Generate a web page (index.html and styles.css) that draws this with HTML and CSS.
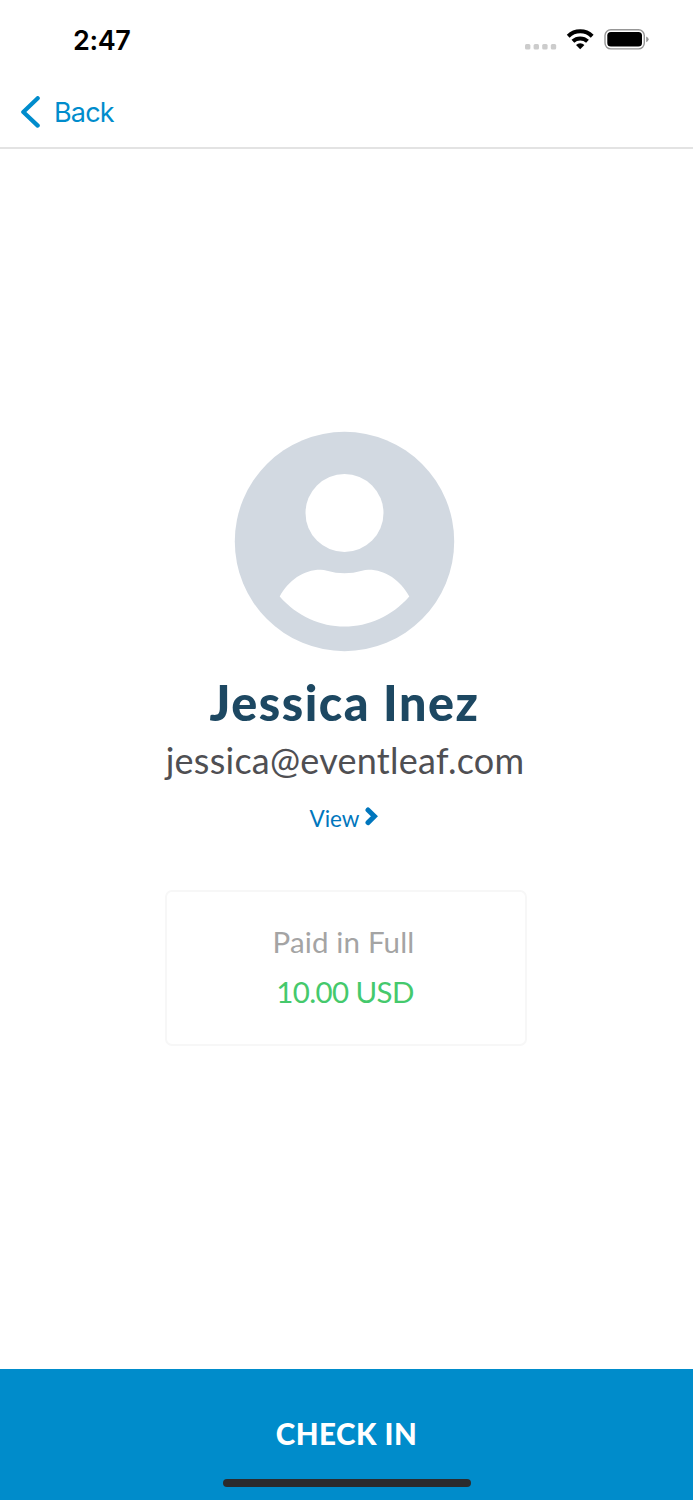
FILE: index.html
```html
<!DOCTYPE html>
<html lang="en">
<head>
<meta charset="utf-8">
<title>Jessica Inez</title>
<link rel="stylesheet" href="styles.css">
</head>
<body>
<div class="screen">
  <header class="status-bar">
    <span class="time">2:47</span>
    <svg class="status-icons" width="126" height="24" viewBox="524 28 126 24" aria-hidden="true">
      <g fill="#ccc">
        <rect x="525" y="44" width="5.4" height="5.4" rx="1.5"/>
        <rect x="533.6" y="44" width="5.4" height="5.4" rx="1.5"/>
        <rect x="542.2" y="44" width="5.4" height="5.4" rx="1.5"/>
        <rect x="550.8" y="44" width="5.4" height="5.4" rx="1.5"/>
      </g>
      <g fill="none" stroke="#000" stroke-width="4">
        <path d="M568.2 36.2a17.2 17.2 0 0 1 24 0"/>
        <path d="M572.9 41.3a10.6 10.6 0 0 1 14.6 0"/>
      </g>
      <path d="M576 45a6.2 6.2 0 0 1 8.400 0L580.200 49.200z"/>
      <rect x="605" y="29.7" width="39.3" height="19.2" rx="5.8" fill="none" stroke="#969696" stroke-width="1.4"/>
      <rect x="607.3" y="32" width="34.7" height="14.6" rx="3.6"/>
      <path d="M646.2 36.4q2.4.8 2.4 2.9t-2.4 2.9z" fill="#969696"/>
    </svg>
  </header>
  <nav class="nav-bar">
    <a class="back">
      <svg class="back-icon" width="20" height="32" viewBox="0 0 20 32" aria-hidden="true"><path d="M17.700 2.200 3.300 16l14.400 13.600" /></svg>
      <span class="back-label">Back</span>
    </a>
  </nav>
  <main class="profile">
    <svg class="avatar" width="220" height="220" viewBox="0.5 0.5 220 220" aria-hidden="true">
      <circle cx="110" cy="110" r="109.7" fill="#d2d9e1"/>
      <circle cx="110" cy="81.5" r="39" fill="#fff"/>
      <path d="M45.2 165C54 149 69 138.3 86 138.3q3.500 0 6.500 1 17.500 5 35 0 3-1 6.500-1C151 138.300 166 149 174.800 165 157 185 134 195 110 195S63 185 45.200 165z" fill="#fff"/>
    </svg>
    <h1 class="name">Jessica Inez</h1>
    <p class="email">jessica@eventleaf.com</p>
    <a class="view">
      <span class="view-label">View</span>
      <svg class="view-icon" width="13" height="20" viewBox="0 0 13 20" aria-hidden="true"><path d="m3 4 6.400 6.300L3 16.600"/></svg>
    </a>
    <section class="payment">
      <span class="payment-status">Paid in Full</span>
      <span class="payment-amount">10.00 USD</span>
    </section>
  </main>
  <footer class="action-bar">
    <span class="check-in">CHECK IN</span>
    <div class="home-indicator"></div>
  </footer>
</div>
</body>
</html>
```
FILE: styles.css
```css
* { box-sizing: border-box; }
body { margin: 0; background: #fff; }
.screen {
  width: 693px;
  height: 1500px;
  display: flex;
  flex-direction: column;
  font-family: Lato, sans-serif;
  white-space: nowrap;
}
.status-bar {
  height: 80px;
  padding: 0 43px 0 73px;
  display: flex;
  align-items: center;
  justify-content: space-between;
}
.time { padding-top: 2px; font: 600 27px/32px Inter, sans-serif; letter-spacing: -0.4px; }
.nav-bar {
  height: 69px;
  padding: 0 21px 3px 20px;
  display: flex;
  align-items: center;
  border-bottom: 2px solid #e3e3e3;
}
.back { display: flex; align-items: center; gap: 14px; color: #008ccc; }
.back-icon { fill: none; stroke: #008ccc; stroke-width: 4.2; stroke-linecap: round; stroke-linejoin: round; }
.back-label { padding-top: 1px; font: 400 27px/32px Inter, sans-serif; letter-spacing: -0.8px; }
.profile {
  flex: 1;
  padding: 282.5px 0 0;
  display: flex;
  flex-direction: column;
  align-items: center;
}
.avatar { margin-right: 4px; overflow: visible; }
.name {
  margin: 20px 4px 0 0;
  font-size: 48.5px;
  line-height: 60px;
  font-weight: 900;
  letter-spacing: 1.5px;
  color: #1d4862;
}
.email {
  margin: 5px 3px 0 0;
  font-size: 36px;
  line-height: 46px;
  letter-spacing: 0.25px;
  color: #4f4f53;
}
.view { margin: 20px 6px 0 0; height: 32px; display: flex; gap: 5px; color: #0076bd; }
.view-label { font-size: 22.5px; line-height: 32px; }
.view-icon { margin-top: 3px; fill: none; stroke: #0076bd; stroke-width: 5; stroke-linecap: round; }
.payment {
  width: 362px;
  height: 156px;
  margin: 55px 2px 0 0;
  padding: 30px 4px 0 0;
  border: 2px solid #f7f7f7;
  border-radius: 7px;
  display: flex;
  flex-direction: column;
  align-items: center;
  gap: 10px;
  font-size: 29.5px;
  line-height: 40px;
}
.payment-status { color: #a4a4a4; letter-spacing: 0.15px; }
.payment-amount { margin-left: 3px; color: #45c96c; letter-spacing: -0.6px; }
.action-bar {
  height: 131.5px;
  padding-top: 45px;
  background: #008ccb;
  display: flex;
  flex-direction: column;
  align-items: center;
}
.check-in { font-size: 29.5px; line-height: 40px; font-weight: 900; letter-spacing: 0.5px; color: #fff; }
.home-indicator { width: 248px; height: 8px; margin-top: 25px; border-radius: 4px; background: #2b2b2d; }
```
